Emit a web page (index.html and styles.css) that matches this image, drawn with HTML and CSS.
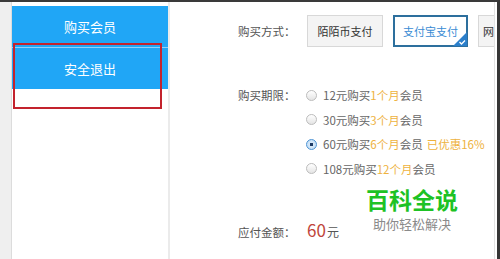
FILE: index.html
```html
<!DOCTYPE html>
<html lang="zh-CN">
<head>
  <meta charset="UTF-8" />
  <title>购买会员</title>
  <link rel="stylesheet" href="styles.css">
</head>
<body>
  <div class="page">
    <div class="gutter"></div>

    <!-- Меню -->
    <nav class="sidebar">
      <a class="nav-item">购买会员</a>
      <a class="nav-item">安全退出</a>
    </nav>
    <div class="mark-box"></div>

    <!-- Форма оплаты -->
    <main class="main">
      <div class="field field-pay">
        <span class="label">购买方式：</span>
        <div class="pay-list">
          <button class="pay-btn">陌陌币支付</button>
          <button class="pay-btn active">支付宝支付
            <svg class="corner" width="14" height="14" viewBox="0 0 14 14">
              <path d="M14 0 L14 14 L0 14 Z" fill="#2b7fcb"/>
              <path d="M6.5 10 L8.5 12 L12 8.5" stroke="#fff" stroke-width="1.3" fill="none"/>
            </svg>
          </button>
          <button class="pay-btn cut">网银支付</button>
        </div>
      </div>

      <div class="field field-term">
        <span class="label">购买期限：</span>
        <div class="options">
          <label class="option"><span class="radio"></span>12元购买<em>1个月</em>会员</label>
          <label class="option"><span class="radio"></span>30元购买<em>3个月</em>会员</label>
          <label class="option"><span class="radio checked"></span>60元购买<em>6个月</em>会员 <em class="discount">已优惠16%</em></label>
          <label class="option"><span class="radio"></span>108元购买<em>12个月</em>会员</label>
        </div>
      </div>

      <div class="field field-sum">
        <span class="label">应付金额：</span>
        <span class="sum"><b>60</b>元</span>
      </div>
    </main>
    <div class="spacer"></div>

    <div class="watermark">
      <div class="wm-title">百科全说</div>
      <div class="wm-sub">助你轻松解决</div>
    </div>
  </div>
</body>
</html>
```

FILE: styles.css
```css
body {
  margin: 0;
  font-family: "Noto Sans CJK SC", "Noto Sans", sans-serif;
  background: #fff;
  overflow: hidden;
}

.page {
  position: relative;
  display: flex;
  width: 500px;
  height: 259px;
  box-sizing: border-box;
  border-top: 2px solid #3a3a3a;
  border-right: 3px solid #363636;
  overflow: hidden;
}

.gutter {
  width: 11px;
  background: #efefef;
  border-right: 1px solid #dcdcdc;
}

.sidebar {
  width: 156px;
  padding-top: 4px;
  border-right: 2px solid #ebebeb;
}

.nav-item {
  display: block;
  height: 41px;
  line-height: 42px;
  text-align: center;
  color: #fff;
  font-size: 13px;
  background: #20a6f6;
}

.nav-item + .nav-item {
  border-top: 1px solid #8fd0fa;
}

.mark-box {
  position: absolute;
  left: 13px;
  top: 41px;
  width: 149px;
  height: 66px;
  box-sizing: border-box;
  border: 2px solid #c3232d;
}

.main {
  flex: 1;
  padding: 13px 0 0 68px;
  border-right: 1px solid #e3e3e3;
  overflow: hidden;
  color: #666;
  font-size: 11.5px;
}

.spacer {
  width: 2px;
}

.field {
  display: grid;
  grid-template-columns: 69px max-content;
}

.field-pay {
  align-items: center;
}

.field-term {
  margin-top: 36px;
  align-items: start;
}

.field-sum {
  margin-top: 36px;
  align-items: baseline;
}

.label {
  line-height: 24px;
  color: #555;
}

.pay-list {
  display: flex;
  gap: 10px;
}

.pay-btn {
  position: relative;
  width: 76px;
  height: 32px;
  padding: 0;
  font-family: inherit;
  font-size: 11px;
  color: #333;
  background: #f4f4f4;
  border: 1px solid #d8d8d8;
  flex-shrink: 0;
}

.pay-btn.active {
  width: 75px;
  background: #fff;
  border: 2px solid #2d6f9d;
  color: #3a8cd4;
}

.pay-btn.cut {
  text-align: left;
  padding-left: 4px;
}

.corner {
  position: absolute;
  right: -1px;
  bottom: -1px;
}

.options {
  display: flex;
  flex-direction: column;
}

.option {
  display: flex;
  align-items: center;
  height: 24.5px;
  margin-left: -1px;
}

.option em {
  font-style: normal;
  color: #eeb23e;
}

.option .discount {
  margin-left: 4px;
}

.radio {
  width: 11px;
  height: 11px;
  box-sizing: border-box;
  margin-right: 6px;
  border: 1px solid #bcbcbc;
  border-radius: 50%;
  background: linear-gradient(#fff, #e4e4e4);
}

.radio.checked {
  border-color: #4e94d4;
  background: radial-gradient(circle, #1d3b66 1.5px, #d6e9fa 2px, #b7d6f2);
}

.sum {
  font-size: 12px;
  color: #555;
}

.sum b {
  font-weight: normal;
  font-size: 17px;
  color: #c0453a;
  margin-right: 1px;
}

.watermark {
  position: absolute;
  left: 366px;
  top: 183px;
  text-align: center;
}

.wm-title {
  font-size: 23px;
  font-weight: bold;
  color: #1dc224;
  line-height: 28px;
}

.wm-sub {
  font-size: 13px;
  color: #8a8a8a;
  line-height: 16px;
  margin-top: 3px;
}
```
